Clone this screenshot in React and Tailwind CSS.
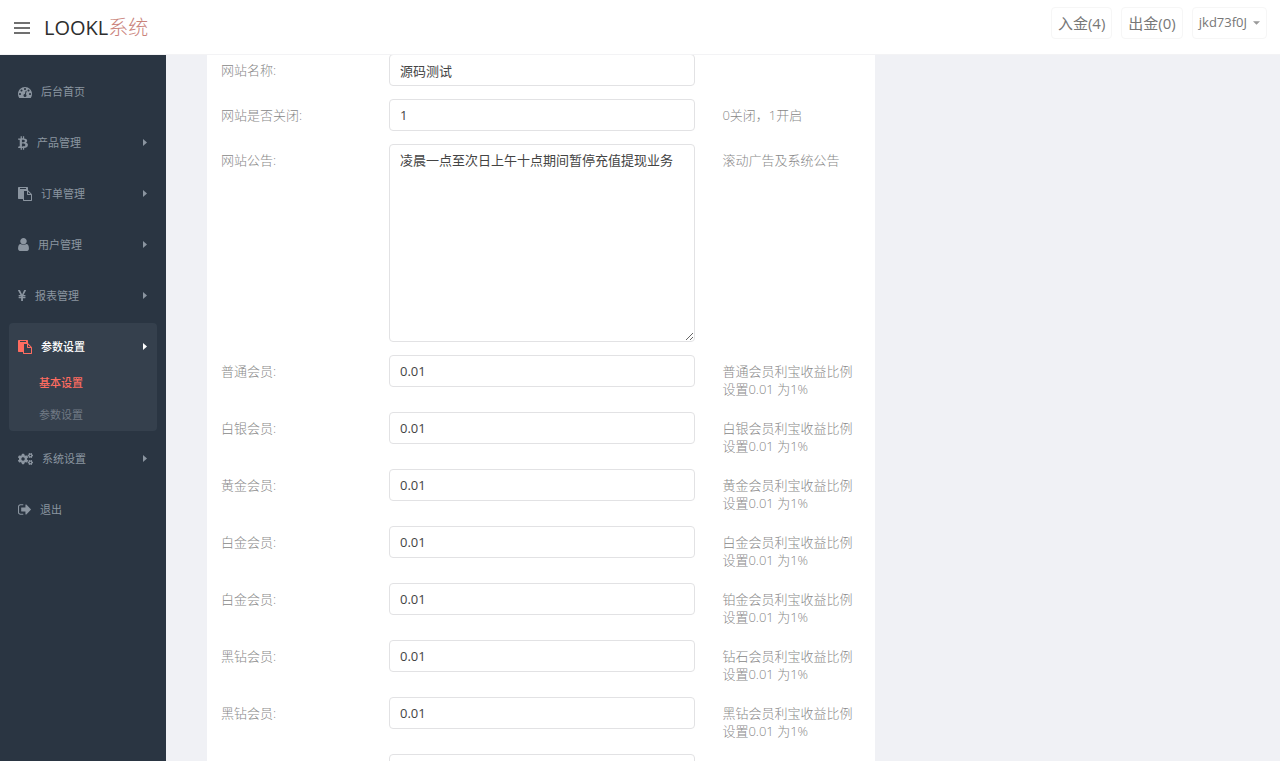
import { useState } from "react";
import clsx from "clsx";
import { FaBtc, FaCogs } from "react-icons/fa";

function DashboardIcon({ className }) {
  return (
    <svg viewBox="0 0 1792 1792" fill="currentColor" aria-hidden="true" className={className}>
      <path d="M384 1152q0-53-37.5-90.5t-90.5-37.5-90.5 37.5-37.5 90.5 37.5 90.5 90.5 37.5 90.5-37.5 37.5-90.5zm192-448q0-53-37.5-90.5t-90.5-37.5-90.5 37.5-37.5 90.5 37.5 90.5 90.5 37.5 90.5-37.5 37.5-90.5zm428 481l101-382q6-26-7.5-48.5t-38.5-29.5-48 6.5-30 39.5l-101 382q-60 5-107 43.5t-63 98.5q-20 77 20 146t117 89 146-20 89-117q16-60-6-117t-72-91zm660-33q0-53-37.5-90.5t-90.5-37.5-90.5 37.5-37.5 90.5 37.5 90.5 90.5 37.5 90.5-37.5 37.5-90.5zm-640-640q0-53-37.5-90.5t-90.5-37.5-90.5 37.5-37.5 90.5 37.5 90.5 90.5 37.5 90.5-37.5 37.5-90.5zm448 192q0-53-37.5-90.5t-90.5-37.5-90.5 37.5-37.5 90.5 37.5 90.5 90.5 37.5 90.5-37.5 37.5-90.5zm320 448q0 261-141 483-19 29-54 29h-1402q-35 0-54-29-141-221-141-483 0-182 71-348t191-286 286-191 348-71 348 71 286 191 191 286 71 348z" />
    </svg>
  );
}

function PasteIcon({ className }) {
  return (
    <svg viewBox="0 0 1792 1792" fill="currentColor" aria-hidden="true" className={className}>
      <path d="M768 1664h896v-640h-416q-40 0-68-28t-28-68v-416h-384v1152zm256-1440v-64q0-13-9.5-22.5t-22.5-9.5h-704q-13 0-22.5 9.5t-9.5 22.5v64q0 13 9.5 22.5t22.5 9.5h704q13 0 22.5-9.5t9.5-22.5zm256 672h299l-299-299v299zm512 128v672q0 40-28 68t-68 28h-960q-40 0-68-28t-28-68v-160h-544q-40 0-68-28t-28-68v-1344q0-40 28-68t68-28h1088q40 0 68 28t28 68v328q21 13 36 28l408 408q28 28 48 76t20 88z" />
    </svg>
  );
}

function UserIcon({ className }) {
  return (
    <svg viewBox="256 128 1280 1536" fill="currentColor" aria-hidden="true" className={className}>
      <path d="M1536 1399q0 109-62.5 187t-150.5 78h-854q-88 0-150.5-78t-62.5-187q0-85 8.5-160.5t31.5-152 58.5-131 94-89 134.5-34.5q131 128 313 128t313-128q76 0 134.5 34.5t94 89 58.5 131 31.5 152 8.5 160.5zm-256-887q0 159-112.5 271.5t-271.5 112.5-271.5-112.5-112.5-271.5 112.5-271.5 271.5-112.5 271.5 112.5 112.5 271.5z" />
    </svg>
  );
}

function YenIcon({ className }) {
  return (
    <svg viewBox="380 128 1030 1408" fill="currentColor" aria-hidden="true" className={className}>
      <path d="M985.5 1536h-172q-13 0-22.5-9t-9.5-23v-330h-288q-13 0-22.5-9t-9.5-23v-103q0-13 9.5-22.5t22.5-9.5h288v-85h-288q-13 0-22.5-9t-9.5-23v-104q0-13 9.5-22.5t22.5-9.5h214l-321-578q-8-16 0-32 10-16 28-16h194q19 0 29 18l215 425q19 38 56 125 10-24 30.5-68t27.5-61l191-420q8-19 29-19h191q17 0 27 16 9 14 1 31l-313 579h215q13 0 22.5 9.5t9.5 22.5v104q0 14-9.5 23t-22.5 9h-290v85h290q13 0 22.5 9.5t9.5 22.5v103q0 14-9.5 23t-22.5 9h-290v330q0 13-9.5 22.5t-22.5 9.5z" />
    </svg>
  );
}

function SignOutIcon({ className }) {
  return (
    <svg viewBox="64 256 1568 1280" fill="currentColor" aria-hidden="true" className={className}>
      <path d="M704 1440q0 4 1 20t.5 26.5-3 23.5-10 19.5-20.5 6.5h-320q-119 0-203.5-84.5t-84.5-203.5v-704q0-119 84.5-203.5t203.5-84.5h320q13 0 22.5 9.5t9.5 22.5q0 4 1 20t.5 26.5-3 23.5-10 19.5-20.5 6.5h-320q-66 0-113 47t-47 113v704q0 66 47 113t113 47h312l11.5 1 11.5 3 8 5.5 7 9 2 13.5zm928-544q0 26-19 45l-544 544q-19 19-45 19t-45-19-19-45v-288h-448q-26 0-45-19t-19-45v-384q0-26 19-45t45-19h448v-288q0-26 19-45t45-19 45 19l544 544q19 19 19 45z" />
    </svg>
  );
}

const menu = [
  { label: "后台首页", icon: DashboardIcon, size: "h-3.5 w-3.5" },
  { label: "产品管理", icon: FaBtc, size: "h-3.5 w-2.5", arrow: true },
  { label: "订单管理", icon: PasteIcon, size: "h-3.5 w-3.5", arrow: true },
  { label: "用户管理", icon: UserIcon, size: "h-[13px] w-[11px]", arrow: true },
  { label: "报表管理", icon: YenIcon, size: "h-[11px] w-2", arrow: true },
  {
    label: "参数设置",
    icon: PasteIcon,
    size: "h-3.5 w-3.5",
    arrow: true,
    children: ["基本设置", "参数设置"],
  },
  { label: "系统设置", icon: FaCogs, size: "h-4 w-[15px]", arrow: true },
  { label: "退出", icon: SignOutIcon, size: "h-[11px] w-[13px]" },
];

const fields = [
  { id: "site-name", label: "网站名称:", value: "源码测试", help: "" },
  { id: "site-open", label: "网站是否关闭:", value: "1", help: "0关闭，1开启" },
  {
    id: "notice",
    label: "网站公告:",
    value: "凌晨一点至次日上午十点期间暂停充值提现业务",
    help: "滚动广告及系统公告",
    multiline: true,
  },
  { id: "level-1", label: "普通会员:", value: "0.01", help: "普通会员利宝收益比例\n设置0.01 为1%" },
  { id: "level-2", label: "白银会员:", value: "0.01", help: "白银会员利宝收益比例\n设置0.01 为1%" },
  { id: "level-3", label: "黄金会员:", value: "0.01", help: "黄金会员利宝收益比例\n设置0.01 为1%" },
  { id: "level-4", label: "白金会员:", value: "0.01", help: "白金会员利宝收益比例\n设置0.01 为1%" },
  { id: "level-5", label: "白金会员:", value: "0.01", help: "铂金会员利宝收益比例\n设置0.01 为1%" },
  { id: "level-6", label: "黑钻会员:", value: "0.01", help: "钻石会员利宝收益比例\n设置0.01 为1%" },
  { id: "level-7", label: "黑钻会员:", value: "0.01", help: "黑钻会员利宝收益比例\n设置0.01 为1%" },
  { id: "level-8", label: "", value: "", help: "" },
];

function Header() {
  return (
    <header className="z-10 flex h-[55px] shrink-0 items-center justify-between border-b border-[#f3f3f5] bg-white pr-[13px] pl-[14px]">
      <div className="flex items-center gap-[14px] pt-0.5">
        <button type="button" aria-label="菜单" className="flex w-4 flex-col gap-[3px]">
          <span className="h-[2px] w-full bg-[#707070]" />
          <span className="h-[2px] w-full bg-[#707070]" />
          <span className="h-[2px] w-full bg-[#707070]" />
        </button>
        <a href="#home" className="text-[20px] leading-6 text-[#2e2e2e]">
          LOOKL<span className="font-light text-[#c98279]">系统</span>
        </a>
      </div>
      <div className="flex items-center gap-[9px] pb-2 text-[#777777]">
        <a href="#deposit" className="h-8 rounded border border-[#f6f6f6] px-1.5 text-[15px] leading-[30px]">
          入金(4)
        </a>
        <a href="#withdraw" className="h-8 rounded border border-[#f6f6f6] px-1.5 text-[15px] leading-[30px]">
          出金(0)
        </a>
        <button type="button" className="flex h-8 items-center gap-[6px] rounded border border-[#f6f6f6] px-1.5 text-[13px]">
          jkd73f0J
          <svg viewBox="0 0 8 4" fill="#999999" aria-hidden="true" className="h-1 w-[7px]">
            <path d="M0 0h8L4 4z" />
          </svg>
        </button>
      </div>
    </header>
  );
}

function MenuItem({ item }) {
  const Icon = item.icon;
  const active = Boolean(item.children);

  return (
    <li className={clsx("rounded-sm", active && "bg-[#35404d]")}>
      <a
        href="#menu"
        className={clsx(
          "flex h-[47px] items-center gap-[9px] px-[9px]",
          active ? "font-medium text-white" : "text-[#8b95a0]"
        )}
      >
        <Icon className={clsx("shrink-0", item.size, active && "text-[#ff6c60]")} />
        <span className="flex-1 pt-px">{item.label}</span>
        {item.arrow && (
          <svg viewBox="0 0 4 7" fill="currentColor" aria-hidden="true" className="mr-px h-[7px] w-1">
            <path d="M0 0l4 3.5-4 3.5z" />
          </svg>
        )}
      </a>
      {item.children && (
        <ul className="-mt-[3px] pl-[30px] leading-8">
          {item.children.map((child, index) => (
            <li key={child} className="h-8">
              <a href="#submenu" className={index === 0 ? "font-medium text-[#ff6c60]" : "text-[#717a85]"}>
                {child}
              </a>
            </li>
          ))}
        </ul>
      )}
    </li>
  );
}

function FieldRow({ field }) {
  const [value, setValue] = useState(field.value);
  const box = "block w-full rounded border border-[#e2e2e4] bg-white px-2.5 text-[13px] text-[#444444] outline-none";

  return (
    <div className="grid grid-cols-[168px_minmax(0,1fr)_166px] text-[13px] leading-[18px] font-light text-[#888888]">
      <label htmlFor={field.id} className="pt-[7px]">
        {field.label}
      </label>
      {field.multiline ? (
        <textarea
          id={field.id}
          value={value}
          onChange={(event) => setValue(event.target.value)}
          className={clsx(box, "h-[198px] resize py-1.5 font-normal")}
        />
      ) : (
        <input
          id={field.id}
          type="text"
          value={value}
          onChange={(event) => setValue(event.target.value)}
          className={clsx(box, "h-8 font-normal")}
        />
      )}
      <p className={clsx("pl-[27px] whitespace-pre-line", field.help && "pt-[7px]", field.help.includes("\n") && "pb-px")}>
        {field.help}
      </p>
    </div>
  );
}

export default function App() {
  return (
    <div className="flex h-screen flex-col overflow-hidden bg-[#f0f1f5] font-['Open_Sans','Noto_Sans_CJK_SC',sans-serif]">
      <Header />
      <div className="flex min-h-0 flex-1">
        <nav className="w-[166px] shrink-0 bg-[#2a3542] px-[9px] pt-[13px] text-[11px]">
          <ul className="flex flex-col gap-1">
            {menu.map((item) => (
              <MenuItem key={item.label} item={item} />
            ))}
          </ul>
        </nav>
        <main className="min-w-0 flex-1">
          <form className="-mt-px ml-[41px] flex w-3/5 flex-col gap-[13px] bg-white px-[14px]">
            {fields.map((field) => (
              <FieldRow key={field.id} field={field} />
            ))}
          </form>
        </main>
      </div>
    </div>
  );
}
